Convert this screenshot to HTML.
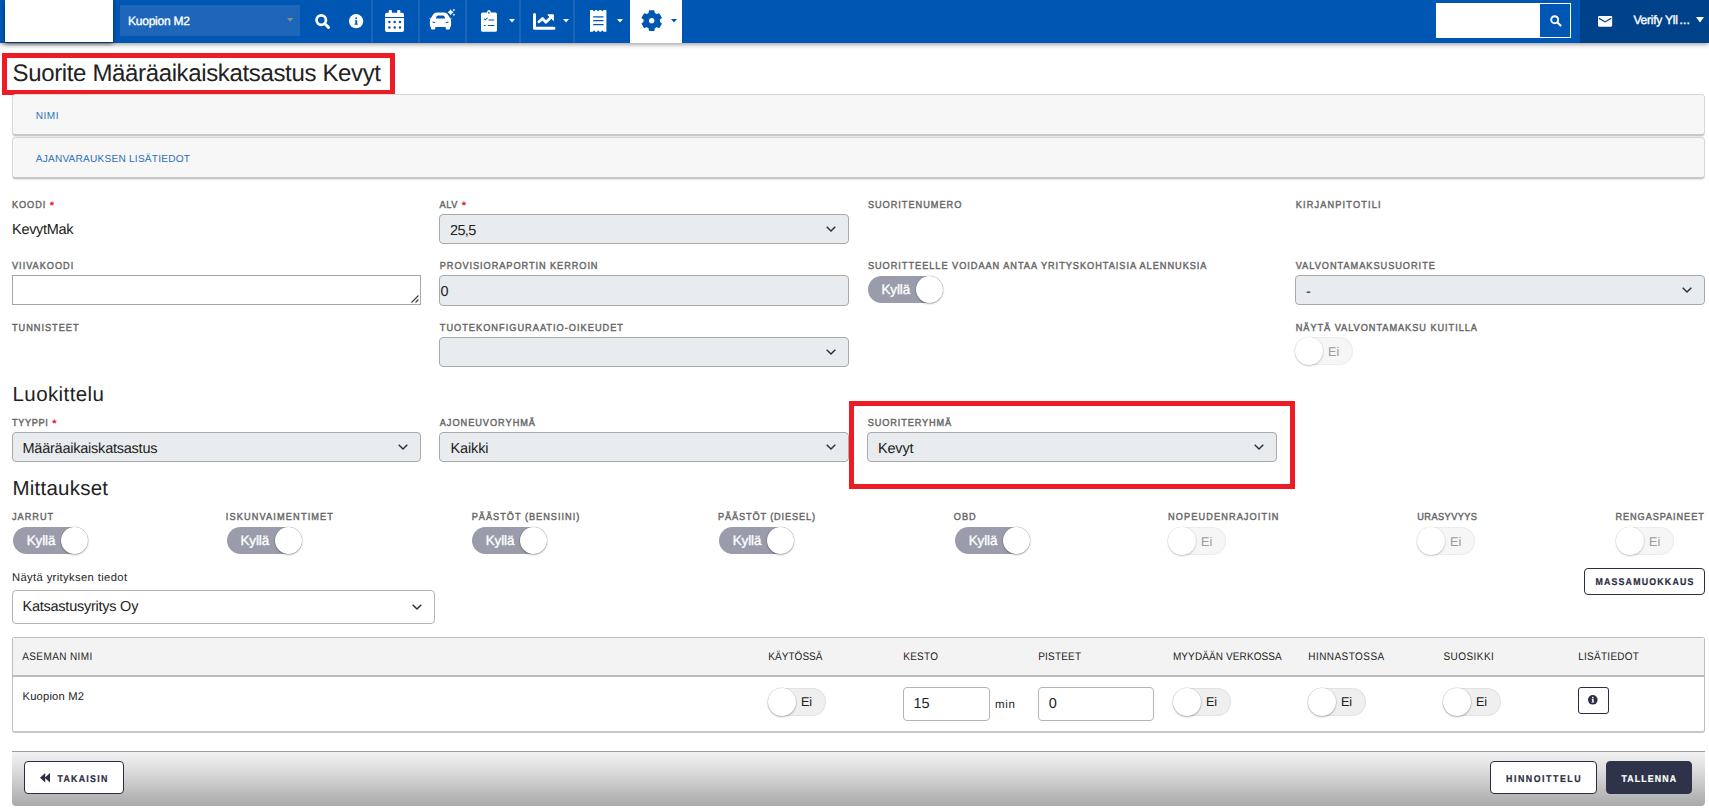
<!DOCTYPE html>
<html lang="fi">
<head>
<meta charset="utf-8">
<title>Suorite Määräaikaiskatsastus Kevyt</title>
<style>
*{box-sizing:border-box;margin:0;padding:0}
html,body{width:1709px;height:809px;overflow:hidden;background:#fff}
body{position:relative;font-family:"Liberation Sans",sans-serif;color:#222}
.a{position:absolute}
.t{position:absolute;white-space:pre;text-rendering:geometricPrecision;font-family:"Liberation Sans",sans-serif}
.sb{-webkit-text-stroke:.35px currentColor}
.sl{-webkit-text-stroke:.4px currentColor}
.sb2{-webkit-text-stroke:.2px currentColor}
svg{position:absolute;overflow:visible}
/* header */
#hdr{left:0;top:0;width:1709px;height:43px;background:#0056b3;box-shadow:0 1px 5px rgba(0,0,0,.45)}
#logo{left:5px;top:0;width:108px;height:42px;background:#fff;box-shadow:0 2px 4px rgba(0,0,0,.48)}
#stsel{left:120px;top:5px;width:180px;height:31px;background:#1d66b9}
.dv{top:0;width:2px;height:43px;background:#1a65b9}
#act{left:630px;top:0;width:52px;height:43px;background:#fff}
#usr{left:1580px;top:0;width:129px;height:43px;background:#004289}
#srch{left:1436px;top:3px;width:135px;height:35px;background:#fff}
#srchb{left:1540px;top:4px;width:30px;height:33px;background:#0056b3}
/* red highlight boxes */
.red{border:5px solid #ed1c24}
/* panels */
.pan{left:12px;width:1693px;height:42px;background:#f7f7f7;border:1px solid #d8d8d8;border-bottom:2px solid #c8c8c8;border-radius:4px;box-shadow:0 1px 1px rgba(0,0,0,.1)}
/* form controls */
.sel{height:30px;background:#e9ecef;border:1px solid #a9a9a9;border-radius:4px}
.wsel{background:#fff;border:1px solid #b4b4b4;border-radius:4px}
.ta{background:#fff;border:1px solid #a6a6a6}
/* toggles */
.tog{position:absolute;height:27px;border-radius:14px}
.tog.on{width:75px;background:#9a9cab}
.tog.off{width:58px;background:#efefef;box-shadow:inset 0 0 0 1px #e2e2e2;height:28px}
.tog.off.dis{width:58px;background:#f6f6f6;box-shadow:inset 0 0 0 1px #ececec}
.tog i{position:absolute;top:0;width:27px;height:27px;border-radius:50%;background:#fff;box-shadow:0 1px 2px rgba(0,0,0,.28),0 0 0 .5px rgba(0,0,0,.12)}
.tog.on i{right:0}
.tog.off i{left:0;top:0;width:28px;height:28px}
.tog.off.dis i{box-shadow:0 1px 2px rgba(0,0,0,.2),0 0 0 .5px rgba(0,0,0,.08)}
/* table */
#tbl{left:12px;top:637px;width:1693px;height:96px;background:#fff;border:1px solid #bdbdbd;border-bottom:2px solid #c6c6c6;border-radius:3px}
#thd{left:13px;top:638px;width:1691px;height:37px;background:#f3f3f3}
#thl{left:13px;top:675px;width:1691px;height:2px;background:#bcbcbc}
/* buttons */
.btn{background:#fff;border:1px solid #2b2d42;border-radius:4px}
#foot{left:12px;top:751px;width:1693px;height:55px;border-top:1px solid #9c9c9c;border-radius:0 0 4px 4px;background:linear-gradient(#f2f2f2,#dcdcdc 35%,#a9a9a9)}
</style>
</head>
<body>
<!-- ===== header ===== -->
<div id="hdr" class="a"></div>
<div id="logo" class="a"></div>
<div id="stsel" class="a"></div>
<svg style="left:287.300px;top:18.200px" width="6.200" height="3.700" viewBox="0 0 7 4"><path d="M0 0H7L3.5 4Z" fill="#938c7d"/></svg>
<div class="dv a" style="left:371px"></div>
<div class="dv a" style="left:418px"></div>
<div class="dv a" style="left:465px"></div>
<div class="dv a" style="left:519px"></div>
<div class="dv a" style="left:573px"></div>
<div id="act" class="a"></div>
<div id="usr" class="a"></div>
<div id="srch" class="a"></div>
<div id="srchb" class="a"></div>

<!-- search icon -->
<svg style="left:315px;top:14px" width="16" height="16" viewBox="0 0 16 16"><circle cx="6.250" cy="6.100" r="4.700" fill="none" stroke="#fff" stroke-width="2.700"/><path d="M9.900 9.800L13.500 13.400" stroke="#fff" stroke-width="2.900" stroke-linecap="round"/></svg>
<!-- info icon -->
<svg style="left:348.700px;top:14.400px" width="15" height="15" viewBox="0 0 15 15"><circle cx="7.100" cy="7.200" r="7.100" fill="#fff"/><circle cx="7.150" cy="4.300" r=".95" fill="#0056b3"/><path d="M5.900 6.300H8.200V9.700H8.900V10.700H5.500V9.700H6.300V7.300H5.900Z" fill="#0056b3"/></svg>
<!-- calendar icon -->
<svg style="left:385px;top:10px" width="20" height="22" viewBox="0 0 20 22"><path d="M0 6.900V4.800Q0 2.800 2 2.800H3.800V.8Q3.800 0 4.600 0H6.100Q6.900 0 6.900 .8V2.800H12.200V.8Q12.200 0 13 0H14.500Q15.300 0 15.300 .8V2.800H17Q19 2.800 19 4.800V6.900ZM0 8.100H19V19.900Q19 21.900 17 21.900H2Q0 21.900 0 19.900ZM3.1500000000000004 12A1.25 1.25 0 1 0 5.65 12A1.25 1.25 0 1 0 3.1500000000000004 12ZM8.45 12A1.25 1.25 0 1 0 10.95 12A1.25 1.25 0 1 0 8.45 12ZM13.75 12A1.25 1.25 0 1 0 16.25 12A1.25 1.25 0 1 0 13.75 12ZM3.1500000000000004 17.5A1.25 1.25 0 1 0 5.65 17.5A1.25 1.25 0 1 0 3.1500000000000004 17.5ZM8.45 17.5A1.25 1.25 0 1 0 10.95 17.5A1.25 1.25 0 1 0 8.45 17.5ZM13.75 17.5A1.25 1.25 0 1 0 16.25 17.5A1.25 1.25 0 1 0 13.75 17.5Z" fill="#fff" fill-rule="evenodd"/></svg>
<!-- car icon -->
<svg style="left:429px;top:9px" width="27" height="21" viewBox="0 0 27 21"><path d="M1.500 9.700L4.300 5.300Q5.500 3.500 7.600 3.500H15.400Q17.500 3.500 18.700 5.300L21.500 9.700L22.300 8.900L22.600 9.800L21.700 10.600Q22.100 11.300 22.100 12.400V16.500Q22.100 17.700 21.100 18V19.300Q21.100 20.500 19.900 20.500H17.900Q16.700 20.500 16.700 19.300V18.100H6.300V19.300Q6.300 20.500 5.100 20.500H3.100Q1.900 20.500 1.900 19.300V18Q.900 17.700 .900 16.500V12.400Q.900 11.300 1.300 10.600L.400 9.800L.700 8.900ZM6.700 9.400L7.700 7.300Q8.200 6.400 9.300 6.400H13.700Q14.800 6.400 15.300 7.300L16.300 9.400ZM3.600 12.600L6.300 13.200V14.100L3.600 13.800ZM19.400 12.600L16.700 13.200V14.100L19.400 13.800Z" fill="#fff" fill-rule="evenodd"/><path d="M21.6 0.2999999999999998Q22.44 2.46 24.6 3.3Q22.44 4.14 21.6 6.3Q20.76 4.14 18.6 3.3Q20.76 2.46 21.6 0.2999999999999998ZM24.9 -0.19999999999999996Q25.264 0.736 26.2 1.1Q25.264 1.4640000000000002 24.9 2.4000000000000004Q24.535999999999998 1.4640000000000002 23.599999999999998 1.1Q24.535999999999998 0.736 24.9 -0.19999999999999996ZM24.9 4.4Q25.264 5.336 26.2 5.7Q25.264 6.064 24.9 7.0Q24.535999999999998 6.064 23.599999999999998 5.7Q24.535999999999998 5.336 24.9 4.4Z" fill="#fff"/></svg>
<!-- clipboard icon -->
<svg style="left:481px;top:10px" width="16" height="22" viewBox="0 0 16 22"><path d="M1.600 2.600H5.900Q6.100 0 7.900 0Q9.700 0 9.900 2.600H14.400Q16 2.600 16 4.200V20.200Q16 21.800 14.400 21.800H1.600Q0 21.800 0 20.200V4.200Q0 2.600 1.600 2.600ZM7.900 1.900A.9 .9 0 1 0 7.900 3.700A.9 .9 0 1 0 7.900 1.900ZM2.800 9L4.300 10.400L6.900 8L6.300 7.400L4.300 9.300L3.400 8.400ZM7.500 9.400V10.500H13.300V9.400ZM2.800 15V16H4.600V15ZM6.900 14.900V16.100H13.300V14.900Z" fill="#fff" fill-rule="evenodd"/></svg>
<svg style="left:509px;top:19px" width="6" height="4" viewBox="0 0 6 4"><path d="M0 0H6L3 3.600Z" fill="#fff"/></svg>
<!-- chart icon -->
<svg style="left:532.500px;top:12.500px" width="23" height="17" viewBox="0 0 23 17"><path d="M1.500 1.400V15.300H21" fill="none" stroke="#fff" stroke-width="3" stroke-linecap="round" stroke-linejoin="round"/><path d="M5.900 8.800L9.600 5.600L12.900 9.300L17.300 5" fill="none" stroke="#fff" stroke-width="2.800" stroke-linecap="round" stroke-linejoin="round"/><path d="M14.800 1.800H20.400V7.400Z" fill="#fff" stroke="#fff" stroke-width="1" stroke-linejoin="round"/></svg>
<svg style="left:563px;top:19px" width="6" height="4" viewBox="0 0 6 4"><path d="M0 0H6L3 3.600Z" fill="#fff"/></svg>
<!-- receipt icon -->
<svg style="left:589.700px;top:9.800px" width="17" height="22" viewBox="0 0 17 22"><path d="M0 0H2.80L4.1 1.6L5.40 0H6.90L8.2 1.6L9.50 0H11.00L12.3 1.6L13.60 0H16.4V21.8H13.60L12.3 20.2L11.00 21.8H9.50L8.2 20.2L6.90 21.8H5.40L4.1 20.2L2.80 21.8H0ZM3.200 6.15V7.45H13.500V6.15ZM3.200 10.05V11.35H13.500V10.05ZM3.200 14.05V15.35H13.500V14.05Z" fill="#fff" fill-rule="evenodd"/></svg>
<svg style="left:617px;top:19px" width="6" height="4" viewBox="0 0 6 4"><path d="M0 0H6L3 3.600Z" fill="#fff"/></svg>
<!-- gear icon -->
<svg style="left:641.200px;top:9.950px" width="21.400" height="21.400" viewBox="-10.700 -10.700 21.400 21.400"><path d="M2.51 -7.28L2.15 -9.71L-2.15 -9.71L-2.51 -7.28L-5.05 -5.81L-7.34 -6.72L-9.49 -2.99L-7.56 -1.47L-7.56 1.47L-9.49 2.99L-7.34 6.72L-5.05 5.81L-2.51 7.28L-2.15 9.71L2.15 9.71L2.51 7.28L5.05 5.81L7.34 6.72L9.49 2.99L7.56 1.47L7.56 -1.47L9.49 -2.99L7.34 -6.72L5.05 -5.81ZM3.4 0A3.4 3.4 0 1 0 -3.4 0A3.4 3.4 0 1 0 3.4 0Z" fill="#0056b3" fill-rule="evenodd" stroke="#0056b3" stroke-width="1.300" stroke-linejoin="round"/></svg>
<svg style="left:671px;top:19px" width="6" height="4" viewBox="0 0 6 4"><path d="M0 0H6L3 3.600Z" fill="#0056b3"/></svg>
<!-- search button icon -->
<svg style="left:1549.500px;top:15px" width="12" height="12" viewBox="0 0 12 12"><circle cx="4.700" cy="4.700" r="3.500" fill="none" stroke="#fff" stroke-width="1.900"/><path d="M7.400 7.400L10.600 10.600" stroke="#fff" stroke-width="2.100" stroke-linecap="round"/></svg>
<!-- envelope -->
<svg style="left:1597.800px;top:15.600px" width="14.200" height="10.700" viewBox="0 0 14.200 10.700"><path d="M1.100 0H13.100Q14.200 0 14.200 1.100V9.600Q14.200 10.700 13.100 10.700H1.100Q0 10.700 0 9.600V1.100Q0 0 1.100 0ZM.9 1.600V2.900L7.100 6.500L13.300 2.900V1.600L7.100 5.200Z" fill="#fff" fill-rule="evenodd"/></svg>
<svg style="left:1696px;top:17px" width="8" height="6" viewBox="0 0 8 6"><path d="M0 0H8L4 5.500Z" fill="#fff"/></svg>

<!-- ===== title + red box ===== -->
<div class="a red" style="left:2px;top:53px;width:393px;height:42px"></div>

<!-- panels -->
<div class="a pan" style="top:94px"></div>
<div class="a pan" style="top:137px"></div>

<!-- ===== form controls ===== -->
<div class="a sel" style="left:439px;top:214px;width:410px"></div>
<div class="a ta" style="left:12px;top:275px;width:409px;height:30px"></div>
<svg style="left:410px;top:294px" width="9" height="9" viewBox="0 0 9 9"><path d="M1.500 8.500L8.500 1.500M5.500 8.500L8.500 5.500" stroke="#3c3c3c" stroke-width="1.150" fill="none"/></svg>
<div class="a sel" style="left:439px;top:275px;width:410px;height:31px"></div>
<div class="a sel" style="left:1295px;top:275px;width:410px"></div>
<div class="a sel" style="left:439px;top:337px;width:410px"></div>
<div class="a sel" style="left:12px;top:432px;width:409px"></div>
<div class="a sel" style="left:439px;top:432px;width:410px"></div>
<div class="a sel" style="left:867px;top:432px;width:410px"></div>
<div class="a wsel" style="left:12px;top:590px;width:423px;height:34px"></div>

<!-- chevrons -->
<svg class="chev" style="left:826px;top:225.600px" width="10" height="6" viewBox="0 0 10 6"><path d="M.7 .7L5 5L9.300 .7" fill="none" stroke="#333" stroke-width="1.500"/></svg>
<svg class="chev" style="left:1682px;top:287px" width="10" height="6" viewBox="0 0 10 6"><path d="M.7 .7L5 5L9.300 .7" fill="none" stroke="#333" stroke-width="1.500"/></svg>
<svg class="chev" style="left:826px;top:349px" width="10" height="6" viewBox="0 0 10 6"><path d="M.7 .7L5 5L9.300 .7" fill="none" stroke="#333" stroke-width="1.500"/></svg>
<svg class="chev" style="left:398px;top:443.800px" width="10" height="6" viewBox="0 0 10 6"><path d="M.7 .7L5 5L9.300 .7" fill="none" stroke="#333" stroke-width="1.500"/></svg>
<svg class="chev" style="left:826px;top:443.800px" width="10" height="6" viewBox="0 0 10 6"><path d="M.7 .7L5 5L9.300 .7" fill="none" stroke="#333" stroke-width="1.500"/></svg>
<svg class="chev" style="left:1254px;top:443.800px" width="10" height="6" viewBox="0 0 10 6"><path d="M.7 .7L5 5L9.300 .7" fill="none" stroke="#333" stroke-width="1.500"/></svg>
<svg class="chev" style="left:412px;top:603.500px" width="10" height="6" viewBox="0 0 10 6"><path d="M.7 .7L5 5L9.300 .7" fill="none" stroke="#333" stroke-width="1.500"/></svg>

<!-- red box around Suoriteryhmä -->
<div class="a red" style="left:849px;top:401px;width:446px;height:88px"></div>


<!-- MASSAMUOKKAUS -->
<div class="a btn" style="left:1584px;top:568px;width:121px;height:27px"></div>

<!-- ===== table ===== -->
<div id="tbl" class="a"></div>
<div id="thd" class="a"></div>
<div id="thl" class="a"></div>
<div class="a wsel" style="left:903px;top:687px;width:87px;height:34px"></div>
<div class="a wsel" style="left:1038px;top:687px;width:116px;height:34px"></div>
<div class="a btn" style="left:1578px;top:687px;width:31px;height:27px;border-radius:3px"></div>
<svg style="left:1588.400px;top:695.200px" width="9.600" height="9.600" viewBox="0 0 9 9"><circle cx="4.500" cy="4.500" r="4.500" fill="#2b2d42"/><circle cx="4.500" cy="2.400" r=".85" fill="#fff"/><path d="M3.500 3.800H5.300V6.300H5.800V7.100H3.300V6.300H3.900V4.600H3.500Z" fill="#fff"/></svg>

<!-- toggles -->
<div class="tog on" style="left:867.75px;top:276px"><i></i></div>
<div class="tog on" style="left:13px;top:527px"><i></i></div>
<div class="tog on" style="left:226.75px;top:527px"><i></i></div>
<div class="tog on" style="left:472px;top:527px"><i></i></div>
<div class="tog on" style="left:719px;top:527px"><i></i></div>
<div class="tog on" style="left:955px;top:527px"><i></i></div>
<div class="tog off dis" style="left:1295px;top:337px"><i></i></div>
<div class="tog off dis" style="left:1168px;top:527px"><i></i></div>
<div class="tog off dis" style="left:1417px;top:527px"><i></i></div>
<div class="tog off dis" style="left:1616px;top:527px"><i></i></div>
<div class="tog off" style="left:768px;top:688px"><i></i></div>
<div class="tog off" style="left:1173px;top:688px"><i></i></div>
<div class="tog off" style="left:1308px;top:688px"><i></i></div>
<div class="tog off" style="left:1443px;top:688px"><i></i></div>

<!-- ===== footer ===== -->
<div id="foot" class="a"></div>
<div class="a btn" style="left:24px;top:761px;width:100px;height:33px"></div>
<svg style="left:40.200px;top:773.400px" width="10" height="9.400" viewBox="0 0 10 9.400"><path d="M5.200 0V9.400L0 4.700ZM10 0V9.400L4.800 4.700Z" fill="#2b2d42"/></svg>
<div class="a btn" style="left:1490px;top:761px;width:107px;height:33px"></div>
<div class="a btn" style="left:1606px;top:761px;width:86px;height:33px;background:#2f3349;border-color:#2f3349"></div>

<!-- ===== text ===== -->
<span class="t sb" style="left:128.00px;top:13.00px;font-size:12px;line-height:16px;color:#fff;letter-spacing:-0.227px;">Kuopion M2</span>
<span class="t sb" style="left:1633.40px;top:12.00px;font-size:12.2px;line-height:16px;color:#fff;letter-spacing:-0.289px;">Verify Yll<span style="margin-left:1.89px;letter-spacing:0.064px">...</span></span>
<span class="t" style="left:12.50px;top:58.00px;font-size:24px;line-height:32px;color:#222;letter-spacing:-0.354px;">Suorite Määräaikaiskatsastus Kevyt</span>
<span class="t" style="left:35.70px;top:110.00px;font-size:10.1px;line-height:14px;color:#2a6fb8;letter-spacing:0.496px;">NIMI</span>
<span class="t" style="left:35.70px;top:153.00px;font-size:10.1px;line-height:14px;color:#2a6fb8;letter-spacing:0.230px;">AJANVARAUKSEN LISÄTIEDOT</span>
<span class="t sl" style="left:12.00px;top:199.00px;font-size:9.2px;line-height:12px;color:#686868;letter-spacing:0.923px;transform:scaleY(1.1);transform-origin:0 9.00px;">KOODI</span>
<span class="t" style="left:49.66px;top:199.00px;font-size:11px;line-height:15px;color:#e8112d;font-weight:700;">*</span>
<span class="t sl" style="left:439.50px;top:199.00px;font-size:9.2px;line-height:12px;color:#686868;letter-spacing:0.656px;transform:scaleY(1.1);transform-origin:0 9.00px;">ALV</span>
<span class="t" style="left:461.86px;top:199.00px;font-size:11px;line-height:15px;color:#e8112d;font-weight:700;">*</span>
<span class="t sl" style="left:867.90px;top:199.00px;font-size:9.2px;line-height:12px;color:#686868;letter-spacing:0.977px;transform:scaleY(1.1);transform-origin:0 9.00px;">SUORITENUMERO</span>
<span class="t sl" style="left:1295.70px;top:199.00px;font-size:9.2px;line-height:12px;color:#686868;letter-spacing:1.155px;transform:scaleY(1.1);transform-origin:0 9.00px;">KIRJANPITOTILI</span>
<span class="t sl" style="left:12.00px;top:260.00px;font-size:9.2px;line-height:12px;color:#686868;letter-spacing:0.975px;transform:scaleY(1.1);transform-origin:0 9.00px;">VIIVAKOODI</span>
<span class="t sl" style="left:439.75px;top:260.00px;font-size:9.2px;line-height:12px;color:#686868;letter-spacing:0.940px;transform:scaleY(1.1);transform-origin:0 9.00px;">PROVISIORAPORTIN KERROIN</span>
<span class="t sl" style="left:867.90px;top:260.00px;font-size:9.2px;line-height:12px;color:#686868;letter-spacing:0.974px;transform:scaleY(1.1);transform-origin:0 9.00px;">SUORITTEELLE VOIDAAN ANTAA YRITYSKOHTAISIA ALENNUKSIA</span>
<span class="t sl" style="left:1295.70px;top:260.00px;font-size:9.2px;line-height:12px;color:#686868;letter-spacing:0.985px;transform:scaleY(1.1);transform-origin:0 9.00px;">VALVONTAMAKSUSUORITE</span>
<span class="t sl" style="left:12.00px;top:322.00px;font-size:9.2px;line-height:12px;color:#686868;letter-spacing:0.979px;transform:scaleY(1.1);transform-origin:0 9.00px;">TUNNISTEET</span>
<span class="t sl" style="left:439.75px;top:322.00px;font-size:9.2px;line-height:12px;color:#686868;letter-spacing:1.027px;transform:scaleY(1.1);transform-origin:0 9.00px;">TUOTEKONFIGURAATIO-OIKEUDET</span>
<span class="t sl" style="left:1295.70px;top:322.00px;font-size:9.2px;line-height:12px;color:#686868;letter-spacing:0.967px;transform:scaleY(1.1);transform-origin:0 9.00px;">NÄYTÄ VALVONTAMAKSU KUITILLA</span>
<span class="t sl" style="left:12.00px;top:417.00px;font-size:9.2px;line-height:12px;color:#686868;letter-spacing:0.622px;transform:scaleY(1.1);transform-origin:0 9.00px;">TYYPPI</span>
<span class="t" style="left:52.16px;top:417.00px;font-size:11px;line-height:15px;color:#e8112d;font-weight:700;">*</span>
<span class="t sl" style="left:439.75px;top:417.00px;font-size:9.2px;line-height:12px;color:#686868;letter-spacing:0.974px;transform:scaleY(1.1);transform-origin:0 9.00px;">AJONEUVORYHMÄ</span>
<span class="t sl" style="left:867.75px;top:417.00px;font-size:9.2px;line-height:12px;color:#686868;letter-spacing:0.876px;transform:scaleY(1.1);transform-origin:0 9.00px;">SUORITERYHMÄ</span>
<span class="t sl" style="left:12.00px;top:511.00px;font-size:9.2px;line-height:12px;color:#686868;letter-spacing:0.990px;transform:scaleY(1.1);transform-origin:0 9.00px;">JARRUT</span>
<span class="t sl" style="left:225.75px;top:511.00px;font-size:9.2px;line-height:12px;color:#686868;letter-spacing:1.137px;transform:scaleY(1.1);transform-origin:0 9.00px;">ISKUNVAIMENTIMET</span>
<span class="t sl" style="left:471.75px;top:511.00px;font-size:9.2px;line-height:12px;color:#686868;letter-spacing:0.988px;transform:scaleY(1.1);transform-origin:0 9.00px;">PÄÄSTÖT (BENSIINI)</span>
<span class="t sl" style="left:718.00px;top:511.00px;font-size:9.2px;line-height:12px;color:#686868;letter-spacing:0.861px;transform:scaleY(1.1);transform-origin:0 9.00px;">PÄÄSTÖT (DIESEL)</span>
<span class="t sl" style="left:953.75px;top:511.00px;font-size:9.2px;line-height:12px;color:#686868;letter-spacing:1.039px;transform:scaleY(1.1);transform-origin:0 9.00px;">OBD</span>
<span class="t sl" style="left:1168.00px;top:511.00px;font-size:9.2px;line-height:12px;color:#686868;letter-spacing:1.104px;transform:scaleY(1.1);transform-origin:0 9.00px;">NOPEUDENRAJOITIN</span>
<span class="t sl" style="left:1417.30px;top:511.00px;font-size:9.2px;line-height:12px;color:#686868;letter-spacing:0.441px;transform:scaleY(1.1);transform-origin:0 9.00px;">URASYVYYS</span>
<span class="t sl" style="left:1615.50px;top:511.00px;font-size:9.2px;line-height:12px;color:#686868;letter-spacing:0.905px;transform:scaleY(1.1);transform-origin:0 9.00px;">RENGASPAINEET</span>
<span class="t" style="left:12.00px;top:221.00px;font-size:14.5px;line-height:19px;color:#222;letter-spacing:-0.296px;">KevytMak</span>
<span class="t" style="left:450.00px;top:222.00px;font-size:14.5px;line-height:19px;color:#222;letter-spacing:-0.661px;">25,5</span>
<span class="t" style="left:440.46px;top:283.00px;font-size:14.5px;line-height:19px;color:#222;">0</span>
<span class="t" style="left:1305.98px;top:283.00px;font-size:14.5px;line-height:19px;color:#222;">-</span>
<span class="t" style="left:12.50px;top:381.00px;font-size:20.5px;line-height:27px;color:#222;letter-spacing:0.415px;">Luokittelu</span>
<span class="t" style="left:22.50px;top:440.00px;font-size:14.5px;line-height:19px;color:#222;letter-spacing:-0.233px;">Määräaikaiskatsastus</span>
<span class="t" style="left:450.40px;top:440.00px;font-size:14.5px;line-height:19px;color:#222;letter-spacing:-0.097px;">Kaikki</span>
<span class="t" style="left:878.00px;top:440.00px;font-size:14.5px;line-height:19px;color:#222;letter-spacing:-0.191px;">Kevyt</span>
<span class="t" style="left:12.50px;top:475.00px;font-size:20.5px;line-height:27px;color:#222;letter-spacing:0.231px;">Mittaukset</span>
<span class="t" style="left:12.00px;top:571.00px;font-size:11.2px;line-height:15px;color:#222;letter-spacing:0.383px;">Näytä yrityksen tiedot</span>
<span class="t" style="left:22.50px;top:598.00px;font-size:14.5px;line-height:19px;color:#222;letter-spacing:-0.245px;">Katsastusyritys Oy</span>
<span class="t" style="left:22.25px;top:651.00px;font-size:10px;line-height:13px;color:#222;letter-spacing:0.388px;transform:scaleY(1.1);transform-origin:0 9.00px;">ASEMAN NIMI</span>
<span class="t" style="left:768.25px;top:651.00px;font-size:10px;line-height:13px;color:#222;letter-spacing:0.049px;transform:scaleY(1.1);transform-origin:0 9.00px;">KÄYTÖSSÄ</span>
<span class="t" style="left:903.25px;top:651.00px;font-size:10px;line-height:13px;color:#222;letter-spacing:0.258px;transform:scaleY(1.1);transform-origin:0 9.00px;">KESTO</span>
<span class="t" style="left:1038.25px;top:651.00px;font-size:10px;line-height:13px;color:#222;letter-spacing:0.177px;transform:scaleY(1.1);transform-origin:0 9.00px;">PISTEET</span>
<span class="t" style="left:1172.90px;top:651.00px;font-size:10px;line-height:13px;color:#222;letter-spacing:0.109px;transform:scaleY(1.1);transform-origin:0 9.00px;">MYYDÄÄN VERKOSSA</span>
<span class="t" style="left:1308.30px;top:651.00px;font-size:10px;line-height:13px;color:#222;letter-spacing:0.440px;transform:scaleY(1.1);transform-origin:0 9.00px;">HINNASTOSSA</span>
<span class="t" style="left:1443.40px;top:651.00px;font-size:10px;line-height:13px;color:#222;letter-spacing:0.450px;transform:scaleY(1.1);transform-origin:0 9.00px;">SUOSIKKI</span>
<span class="t" style="left:1578.20px;top:651.00px;font-size:10px;line-height:13px;color:#222;letter-spacing:0.271px;transform:scaleY(1.1);transform-origin:0 9.00px;">LISÄTIEDOT</span>
<span class="t" style="left:22.50px;top:690.00px;font-size:11.2px;line-height:15px;color:#222;letter-spacing:0.198px;">Kuopion M2</span>
<span class="t" style="left:913.43px;top:695.00px;font-size:14.5px;line-height:19px;color:#222;">15</span>
<span class="t" style="left:995.00px;top:698.00px;font-size:11.5px;line-height:15px;color:#222;letter-spacing:0.734px;">min</span>
<span class="t" style="left:1048.84px;top:695.00px;font-size:14.5px;line-height:19px;color:#222;">0</span>
<span class="t sb2" style="left:1595.40px;top:576.00px;font-size:8.8px;line-height:12px;color:#2b2d42;font-weight:700;letter-spacing:1.202px;transform:scaleY(1.12);transform-origin:0 9.00px;">MASSAMUOKKAUS</span>
<span class="t sb2" style="left:57.50px;top:773.00px;font-size:8.8px;line-height:12px;color:#2b2d42;font-weight:700;letter-spacing:1.266px;transform:scaleY(1.12);transform-origin:0 9.00px;">TAKAISIN</span>
<span class="t sb2" style="left:1506.00px;top:773.00px;font-size:8.8px;line-height:12px;color:#2b2d42;font-weight:700;letter-spacing:1.546px;transform:scaleY(1.12);transform-origin:0 9.00px;">HINNOITTELU</span>
<span class="t sb2" style="left:1621.50px;top:773.00px;font-size:8.8px;line-height:12px;color:#fff;font-weight:700;letter-spacing:1.107px;transform:scaleY(1.12);transform-origin:0 9.00px;">TALLENNA</span>
<span class="t sb" style="left:881.55px;top:281.00px;font-size:13.4px;line-height:18px;color:#fff;letter-spacing:-0.108px;">Kyllä</span>
<span class="t sb" style="left:26.80px;top:532.00px;font-size:13.4px;line-height:18px;color:#fff;letter-spacing:-0.108px;">Kyllä</span>
<span class="t sb" style="left:240.55px;top:532.00px;font-size:13.4px;line-height:18px;color:#fff;letter-spacing:-0.108px;">Kyllä</span>
<span class="t sb" style="left:485.80px;top:532.00px;font-size:13.4px;line-height:18px;color:#fff;letter-spacing:-0.108px;">Kyllä</span>
<span class="t sb" style="left:732.80px;top:532.00px;font-size:13.4px;line-height:18px;color:#fff;letter-spacing:-0.108px;">Kyllä</span>
<span class="t sb" style="left:968.80px;top:532.00px;font-size:13.4px;line-height:18px;color:#fff;letter-spacing:-0.108px;">Kyllä</span>
<span class="t" style="left:1328.00px;top:344.00px;font-size:12.6px;line-height:17px;color:#9a9a9a;">Ei</span>
<span class="t" style="left:1201.00px;top:534.00px;font-size:12.6px;line-height:17px;color:#9a9a9a;">Ei</span>
<span class="t" style="left:1450.00px;top:534.00px;font-size:12.6px;line-height:17px;color:#9a9a9a;">Ei</span>
<span class="t" style="left:1649.00px;top:534.00px;font-size:12.6px;line-height:17px;color:#9a9a9a;">Ei</span>
<span class="t" style="left:800.90px;top:694.00px;font-size:12.6px;line-height:17px;color:#222;">Ei</span>
<span class="t" style="left:1205.90px;top:694.00px;font-size:12.6px;line-height:17px;color:#222;">Ei</span>
<span class="t" style="left:1340.90px;top:694.00px;font-size:12.6px;line-height:17px;color:#222;">Ei</span>
<span class="t" style="left:1475.90px;top:694.00px;font-size:12.6px;line-height:17px;color:#222;">Ei</span>
</body>
</html>
